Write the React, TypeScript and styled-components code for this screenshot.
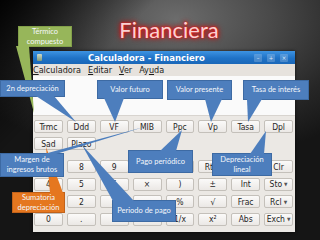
import React from "react";
import styled, { createGlobalStyle } from "styled-components";

const GlobalStyle = createGlobalStyle`
  html, body {
    margin: 0;
    padding: 0;
  }
  body {
    background: #111;
    font-family: "Liberation Sans", Arial, sans-serif;
  }
`;

const Slide = styled.div`
  position: relative;
  width: 320px;
  height: 240px;
  overflow: hidden;
  display: flex;
  flex-direction: column;
  background:
    linear-gradient(135deg, rgba(0, 0, 0, 0.95) 0%, rgba(0, 0, 0, 0) 28%),
    radial-gradient(ellipse 75% 60% at 55% 8%, #6c6c6c 0%, #494949 40%, #262626 75%, #151515 100%);
`;

const Title = styled.h1`
  margin: 0;
  height: 51px;
  box-sizing: border-box;
  padding: 8px 0 0 18px;
  display: flex;
  align-items: center;
  justify-content: center;
  font-family: Lato, "Open Sans", sans-serif;
  font-size: 22px;
  font-weight: 400;
  color: #f8d2d2;
  text-shadow: 0 0 1px #e61e1e, 0 0 2px #e61e1e, 0 0 4px #e01515, 0 0 6px #c00000;
`;

const Window = styled.div`
  margin-left: 33px;
  width: 262px;
  height: 181px;
  display: flex;
  flex-direction: column;
  background: #ebe8e4;
  box-shadow: 0 0 3px rgba(0, 0, 0, 0.7);
  font-family: "DejaVu Sans Condensed", "Liberation Sans Narrow", "Liberation Sans", sans-serif;
`;

const TitleBar = styled.div`
  height: 13px;
  display: flex;
  align-items: center;
  padding: 0 7px 0 4px;
  background: linear-gradient(#3d93e2, #1f72c6 55%, #1a67b8);
  color: #fff;
`;

const AppIcon = styled.span`
  width: 5px;
  height: 7px;
  border-radius: 1px;
  background: linear-gradient(#cfdac8, #7f9a7a);
`;

const WindowTitle = styled.span`
  flex: 1;
  margin-left: 46px;
  font-size: 9.5px;
  font-weight: bold;
  white-space: nowrap;
`;

const Controls = styled.div`
  display: flex;
  gap: 5px;
`;

const Control = styled.span`
  width: 8px;
  height: 8px;
  border-radius: 1px;
  background: rgba(255, 255, 255, 0.2);
  color: #dcebfb;
  font-size: 6px;
  line-height: 8px;
  text-align: center;
`;

const MenuBar = styled.div`
  height: 12px;
  display: flex;
  align-items: center;
  gap: 7px;
  background: #e6e2dd;
  color: #1e1e1e;
  font-size: 9px;
`;

const MenuItem = styled.span`
  white-space: nowrap;
  u {
    text-decoration: underline;
  }
`;

const Display = styled.div`
  height: 40px;
  box-sizing: border-box;
  background: #fafafa;
  border-bottom: 1px solid #d8d4cf;
`;

const Keypad = styled.div`
  flex: 1;
  padding: 4px 2px 0 1px;
  display: flex;
  flex-direction: column;
  gap: 10px;
`;

const KeyGrid = styled.div<{ $rowGap: number }>`
  display: grid;
  grid-template-columns: repeat(8, 1fr);
  grid-auto-rows: 13px;
  column-gap: 4px;
  row-gap: ${(p) => p.$rowGap}px;
`;

const Key = styled.div`
  box-sizing: border-box;
  display: flex;
  align-items: center;
  justify-content: center;
  gap: 2px;
  border: 1px solid #c4c0ba;
  border-radius: 2px;
  background: linear-gradient(#fbfaf9, #ebe8e5);
  color: #262626;
  font-size: 8.5px;
  white-space: nowrap;
  overflow: hidden;
`;

const Caret = styled.span`
  font-size: 5px;
  color: #555;
`;

type Tone = "blue" | "orange" | "green";

const tones: Record<Tone, { fill: string; edge: string }> = {
  blue: { fill: "#4d7ebd", edge: "#3d6aa3" },
  orange: { fill: "#e5771f", edge: "#c2621a" },
  green: { fill: "#97b65a", edge: "#83a04a" },
};

const Bubble = styled.div<{ $x: number; $y: number; $w: number; $h: number; $tone: Tone }>`
  position: absolute;
  left: ${(p) => p.$x}px;
  top: ${(p) => p.$y}px;
  width: ${(p) => p.$w}px;
  height: ${(p) => p.$h}px;
  box-sizing: border-box;
  display: flex;
  align-items: center;
  justify-content: center;
  text-align: center;
  background: ${(p) => tones[p.$tone].fill};
  border: 1px solid ${(p) => tones[p.$tone].edge};
  color: #f4f7fb;
  font-family: Lato, "Open Sans", sans-serif;
  font-size: 7.5px;
  line-height: 10px;
  white-space: nowrap;
`;

const TailLayer = styled.svg`
  position: absolute;
  left: 0;
  top: 0;
  width: 320px;
  height: 240px;
  pointer-events: none;
`;

type CalloutProps = {
  x: number;
  y: number;
  w: number;
  h: number;
  tail: string;
  tone?: Tone;
  children: React.ReactNode;
};

const Callout = ({ x, y, w, h, tail, tone = "blue", children }: CalloutProps) => (
  <>
    <Bubble $x={x} $y={y} $w={w} $h={h} $tone={tone}>
      <span>{children}</span>
    </Bubble>
    <TailLayer viewBox="0 0 320 240">
      <polygon points={tail} fill={tones[tone].fill} />
    </TailLayer>
  </>
);

const finRows = [
  ["Trmc", "Ddd", "VF", "MIB", "Ppc", "Vp", "Tasa", "Dpl"],
  ["Sad", "Plazo"],
];

const numRows = [
  ["7", "8", "9", "÷", "(", "Rtrn", "Bksp", "Clr"],
  ["4", "5", "6", "×", ")", "±", "Int", "Sto▾"],
  ["1", "2", "3", "−", "%", "√", "Frac", "Rcl▾"],
  ["0", ".", "", "+", "1/x", "x²", "Abs", "Exch▾"],
];

const renderKey = (label: string, i: number) => {
  const drop = label.endsWith("▾");
  const text = drop ? label.slice(0, -1) : label;
  return (
    <Key key={i}>
      {text}
      {drop && <Caret>▼</Caret>}
    </Key>
  );
};

const App = () => {
  return (
    <>
      <GlobalStyle />
      <Slide>
        <Title>Financiera</Title>
        <Window>
          <TitleBar>
            <AppIcon />
            <WindowTitle>Calculadora - Financiero</WindowTitle>
            <Controls>
              <Control>–</Control>
              <Control>+</Control>
              <Control>×</Control>
            </Controls>
          </TitleBar>
          <MenuBar>
            <MenuItem>
              <u>C</u>alculadora
            </MenuItem>
            <MenuItem>
              <u>E</u>ditar
            </MenuItem>
            <MenuItem>
              <u>V</u>er
            </MenuItem>
            <MenuItem>
              Ay<u>u</u>da
            </MenuItem>
          </MenuBar>
          <Display />
          <Keypad>
            <KeyGrid $rowGap={4}>
              {finRows.flat().map(renderKey)}
            </KeyGrid>
            <KeyGrid $rowGap={4.5}>
              {numRows.flat().map((label, i) =>
                label ? renderKey(label, i) : <Key key={i} />
              )}
            </KeyGrid>
          </Keypad>
        </Window>

        <Callout x={18} y={26} w={54} h={21} tone="green" tail="16,46 29,46 34,113">
          Térmico
          <br />
          compuesto
        </Callout>
        <Callout x={0} y={80} w={65} h={17} tail="36,96 54,96 76,122">
          2n depreciación
        </Callout>
        <Callout x={97} y={80} w={66} h={19} tail="104,98 124,98 115,122">
          Valor futuro
        </Callout>
        <Callout x={167} y={80} w={65} h={20} tail="205,99 222,99 211,122">
          Valor presente
        </Callout>
        <Callout x={243} y={80} w={66} h={20} tail="247,99 262,99 248,122">
          Tasa de interés
        </Callout>
        <Callout x={12} y={192} w={53} h={21} tone="orange" tail="50,193 63,193 46,147">
          Sumatoria
          <br />
          depreciación
        </Callout>
        <Callout x={0} y={153} w={64} h={24} tail="44,154 56,154 144,127">
          Margen de
          <br />
          ingresos brutos
        </Callout>
        <Callout x={128} y={150} w={65} h={23} tail="160,151 176,151 182,130">
          Pago periódico
        </Callout>
        <Callout x={212} y={153} w={60} h={23} tail="250,154 264,154 266,131">
          Depreciación
          <br />
          lineal
        </Callout>
        <Callout x={112} y={200} w={64} h={22} tail="113,201 134,201 82,145">
          Periodo de pago
        </Callout>
      </Slide>
    </>
  );
};

export default App;
